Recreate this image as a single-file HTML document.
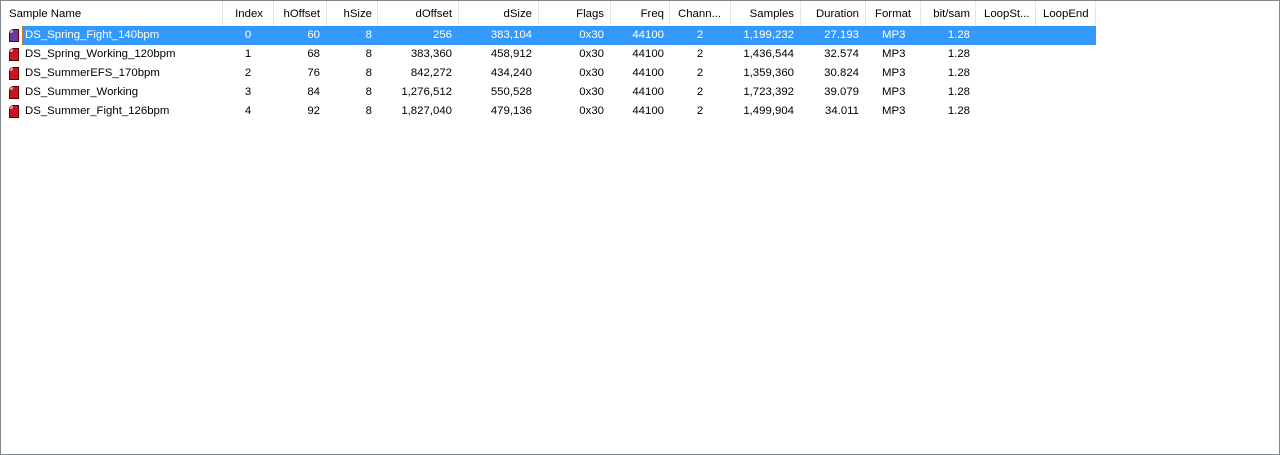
<!DOCTYPE html>
<html><head><meta charset="utf-8"><style>
html,body{margin:0;padding:0;}
body{width:1280px;height:455px;position:relative;background:#fff;font-family:"Liberation Sans",sans-serif;font-size:11.4px;color:#000;overflow:hidden;}
.frame{position:absolute;left:0;top:0;width:1278px;height:453px;border:1px solid #828790;}
.t{position:absolute;white-space:nowrap;line-height:19px;}
.div{position:absolute;top:1px;height:25px;width:1px;background:#e5e5e5;}
.sel{position:absolute;left:22px;top:26px;width:1074px;height:19px;background:#3399ff;outline:1px dotted #c47a2c;outline-offset:-1px;}
.w{color:#fff;}
.ico{position:absolute;width:10px;height:13px;}
</style></head><body>
<div class="frame"></div>
<div class="div" style="left:222px"></div><div class="div" style="left:273px"></div><div class="div" style="left:326px"></div><div class="div" style="left:377px"></div><div class="div" style="left:458px"></div><div class="div" style="left:538px"></div><div class="div" style="left:610px"></div><div class="div" style="left:669px"></div><div class="div" style="left:730px"></div><div class="div" style="left:800px"></div><div class="div" style="left:865px"></div><div class="div" style="left:920px"></div><div class="div" style="left:975px"></div><div class="div" style="left:1035px"></div><div class="div" style="left:1095px"></div>
<div class="sel"></div>
<div id="c"></div>
<script>
var html='';
function t(x,y,s,al,cls){
 if(al=='r') html+='<div class="t '+(cls||'')+'" style="top:'+y+'px;right:'+(1280-x)+'px">'+s+'</div>';
 else if(al=='c') html+='<div class="t '+(cls||'')+'" style="top:'+y+'px;left:'+(x-40)+'px;width:80px;text-align:center">'+s+'</div>';
 else html+='<div class="t '+(cls||'')+'" style="top:'+y+'px;left:'+x+'px">'+s+'</div>';
}
var hy=5;
t(9,hy,'Sample Name','l');t(263,hy,'Index','r');t(320,hy,'hOffset','r');t(372,hy,'hSize','r');t(452,hy,'dOffset','r');t(532,hy,'dSize','r');t(604,hy,'Flags','r');t(664,hy,'Freq','r');t(678,hy,'Chann...','l');t(794,hy,'Samples','r');t(859,hy,'Duration','r');t(875,hy,'Format','l');t(970,hy,'bit/sam','r');t(984,hy,'LoopSt...','l');t(1043,hy,'LoopEnd','l');
var rows=[['DS_Spring_Fight_140bpm','0','60','256','383,104','1,199,232','27.193'],['DS_Spring_Working_120bpm','1','68','383,360','458,912','1,436,544','32.574'],['DS_SummerEFS_170bpm','2','76','842,272','434,240','1,359,360','30.824'],['DS_Summer_Working','3','84','1,276,512','550,528','1,723,392','39.079'],['DS_Summer_Fight_126bpm','4','92','1,827,040','479,136','1,499,904','34.011']];
rows.forEach(function(r,i){var y=26+i*19,c=i==0?'w':'';
 var fill=i==0?'#6a3aa0':'#c8141e';
 html+='<svg class="ico" style="left:9px;top:'+(y+3)+'px" viewBox="0 0 10 13"><path d="M3 .5H9.5V12.5H.5V3Z" fill="'+fill+'" stroke="#5a0000" stroke-width="1"/><path d="M3 .5V3H.5" fill="none" stroke="#fff" stroke-width="1"/></svg>';
 t(25,y,r[0],'l',c);t(248,y,r[1],'c',c);t(320,y,r[2],'r',c);t(372,y,'8','r',c);t(452,y,r[3],'r',c);t(532,y,r[4],'r',c);t(604,y,'0x30','r',c);t(664,y,'44100','r',c);t(700,y,'2','c',c);t(794,y,r[5],'r',c);t(859,y,r[6],'r',c);t(882,y,'MP3','l',c);t(970,y,'1.28','r',c);
});
document.getElementById('c').innerHTML=html;
</script>
</body></html>
